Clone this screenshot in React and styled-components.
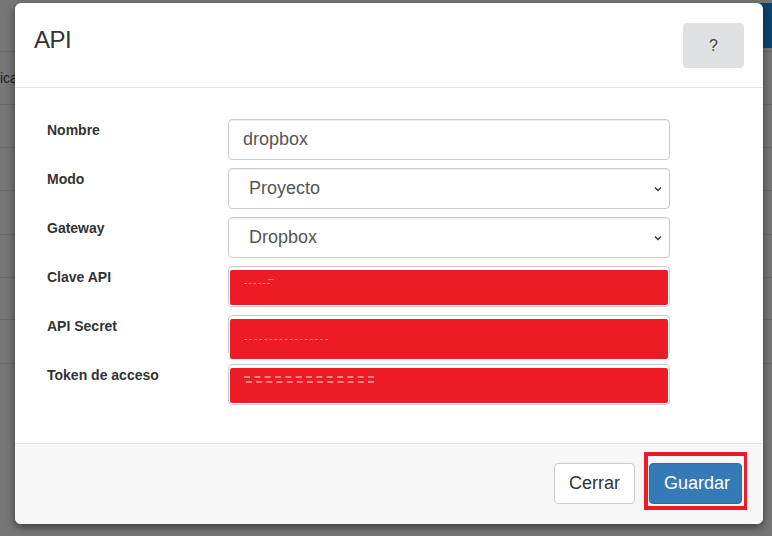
import React from "react";
import styled, { createGlobalStyle } from "styled-components";

const GlobalStyle = createGlobalStyle`
  html, body {
    margin: 0;
    padding: 0;
    background: #747474;
    font-family: "Liberation Sans", Arial, sans-serif;
  }
  * { box-sizing: border-box; }
`;

const Page = styled.div`
  position: relative;
  width: 772px;
  height: 536px;
  overflow: hidden;
  background: #767676;
`;

const TopBar = styled.div`
  height: 52px;
  display: flex;
  justify-content: flex-end;
  padding-top: 3px;
  border-bottom: 1px solid #6a6a6a;
`;

const BlueTab = styled.div`
  width: 20px;
  height: 45px;
  background: #0e446e;
`;

const BgRow = styled.div`
  height: ${(p) => p.$h}px;
  border-bottom: 1px solid #6b6b6b;
  color: #222;
  font-size: 14px;
  display: flex;
  align-items: center;
`;

const Modal = styled.div`
  position: absolute;
  left: 15px;
  top: 3px;
  width: 748px;
  height: 521px;
  background: #fff;
  border-radius: 6px;
  box-shadow: 0 3px 9px rgba(0, 0, 0, 0.5);
  display: flex;
  flex-direction: column;
  overflow: hidden;
`;

const Header = styled.div`
  height: 85px;
  border-bottom: 1px solid #e5e5e5;
  display: flex;
  justify-content: space-between;
  align-items: flex-start;
  padding: 20px 19px 0 19px;
`;

const Title = styled.h4`
  margin: 3px 0 0 0;
  font-size: 24px;
  font-weight: 400;
  color: #333;
  letter-spacing: -0.5px;
`;

const HelpButton = styled.button`
  width: 61px;
  height: 45px;
  border: none;
  border-radius: 4px;
  background: #e0e1e3;
  color: #444;
  font-family: "Liberation Sans", Arial, sans-serif;
  font-size: 16px;
`;

const Body = styled.div`
  flex: 1;
  padding: 31px 93px 0 32px;
  display: flex;
  flex-direction: column;
  gap: 8px;
`;

const Row = styled.div`
  display: grid;
  grid-template-columns: 181px 1fr;
  height: 41px;
`;

const Label = styled.label`
  font-size: 14px;
  font-weight: 700;
  color: #333;
  padding-top: 3px;
`;

const Field = styled.div`
  height: 41px;
  border: 1px solid #ccc;
  border-radius: 4px;
  box-shadow: inset 0 1px 1px rgba(0, 0, 0, 0.075);
  display: flex;
  align-items: center;
  justify-content: space-between;
  padding: ${(p) => (p.$select ? "0 6px 0 20px" : "0 14px")};
  font-size: 18px;
  color: #555;
  background: #fff;
`;

const Redacted = styled.div`
  height: 41px;
  border: 1px solid #ccc;
  border-radius: 4px;
  padding: 3px 1px 1px 1px;
`;

const RedFill = styled.div`
  height: 100%;
  background: #ed1c24;
  border-radius: 2px;
  padding: ${(p) => p.$pad};
  display: flex;
  flex-direction: column;
  gap: 3px;
`;

const Noise = styled.div`
  height: ${(p) => p.$h || 1}px;
  width: ${(p) => p.$w}px;
  margin-left: ${(p) => p.$x || 0}px;
  border-top: ${(p) => p.$h || 1}px dashed rgba(255, 255, 255, 0.45);
`;

const Footer = styled.div`
  height: 81px;
  background: #f7f7f7;
  border-top: 1px solid #e5e5e5;
  display: flex;
  justify-content: flex-end;
  align-items: center;
  gap: 14px;
  padding: 0 21px 2px 0;
`;

const Button = styled.button`
  height: 41px;
  padding: 0 14px;
  font-family: "Liberation Sans", Arial, sans-serif;
  font-size: 18px;
  border-radius: 4px;
  border: 1px solid ${(p) => (p.$primary ? "#2e6da4" : "#ccc")};
  background: ${(p) => (p.$primary ? "#337ab7" : "#fff")};
  color: ${(p) => (p.$primary ? "#fff" : "#333")};
  width: ${(p) => p.$w}px;
`;

const Highlight = styled.div`
  position: relative;
  &::after {
    content: "";
    position: absolute;
    left: -5px;
    right: -5px;
    top: -11px;
    bottom: -6px;
    border: 4px solid #ed1c24;
    border-right-width: 3px;
    pointer-events: none;
  }
`;

const Chevron = () => (
  <svg width="10" height="10" viewBox="0 0 10 10">
    <path d="M2 3.5 L5 6.5 L8 3.5" fill="none" stroke="#333" strokeWidth="1.4" />
  </svg>
);

export default function App() {
  return (
    <Page>
      <GlobalStyle />
      <TopBar>
        <BlueTab />
      </TopBar>
      <BgRow $h={53}>ica</BgRow>
      <BgRow $h={43} />
      <BgRow $h={43} />
      <BgRow $h={44} />
      <BgRow $h={43} />
      <BgRow $h={42} />
      <BgRow $h={44} />

      <Modal>
        <Header>
          <Title>API</Title>
          <HelpButton>?</HelpButton>
        </Header>
        <Body>
          <Row>
            <Label>Nombre</Label>
            <Field>dropbox</Field>
          </Row>
          <Row>
            <Label>Modo</Label>
            <Field $select>
              Proyecto
              <Chevron />
            </Field>
          </Row>
          <Row>
            <Label>Gateway</Label>
            <Field $select>
              Dropbox
              <Chevron />
            </Field>
          </Row>
          <Row>
            <Label>Clave API</Label>
            <Redacted>
              <RedFill $pad="9px 14px">
                <Noise $w={6} $x={24} />
                <Noise $w={26} />
              </RedFill>
            </Redacted>
          </Row>
          <Row>
            <Label>API Secret</Label>
            <Redacted>
              <RedFill $pad="20px 14px">
                <Noise $w={84} />
              </RedFill>
            </Redacted>
          </Row>
          <Row>
            <Label>Token de acceso</Label>
            <Redacted>
              <RedFill $pad="8px 14px">
                <Noise $w={130} $h={2} />
                <Noise $w={128} $x={2} $h={2} />
              </RedFill>
            </Redacted>
          </Row>
        </Body>
        <Footer>
          <Button $w={81}>Cerrar</Button>
          <Highlight>
            <Button $primary $w={93}>Guardar</Button>
          </Highlight>
        </Footer>
      </Modal>
    </Page>
  );
}
